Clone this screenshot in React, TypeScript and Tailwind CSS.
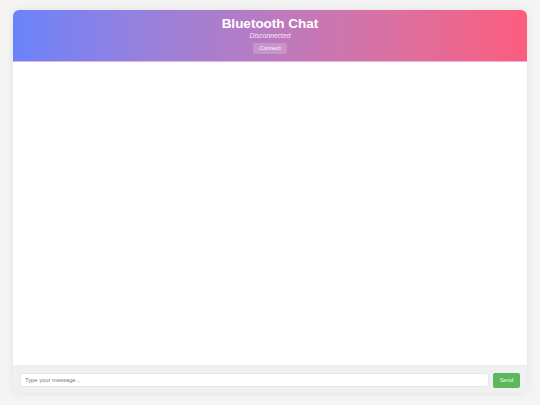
import React from "react";

export default function App() {
  return (
    <div className="w-[540px] h-[405px] bg-[#f4f4f4] pt-[10px] px-[13px] overflow-hidden" style={{ fontFamily: '"Liberation Sans", Arial, sans-serif' }}>
      <div className="h-[383px] flex flex-col rounded-[6px] overflow-hidden bg-white shadow-[0_0_8px_rgba(0,0,0,0.08)]">
        <div className="h-[52px] shrink-0 bg-gradient-to-r from-[#6a82fb] to-[#fc5c7d] flex flex-col items-center pt-[6px] border-b border-[#e6b3dc]">
          <div className="text-white font-bold text-[13.5px] leading-[16px]">Bluetooth Chat</div>
          <div className="text-white/80 italic text-[6.75px] leading-[9px] mt-[-1px]">Disconnected</div>
          <button className="mt-[3px] h-[11px] px-[6px] rounded-[2px] bg-white/20 text-white/90 text-[5.8px] leading-[11px]">Connect</button>
        </div>
        <div className="flex-1 bg-white" />
        <div className="h-[28px] shrink-0 bg-[#f0f0f0] flex items-center px-[7px] gap-[4px] pt-[2px]">
          <input
            className="flex-1 h-[14px] bg-white border border-[#e8e8e8] rounded-[2px] px-[4px] text-[5.8px] outline-none placeholder:text-[#777]"
            placeholder="Type your message..."
          />
          <button className="w-[27px] h-[15px] rounded-[2px] bg-[#5cb85c] text-white/90 text-[5.8px]">Send</button>
        </div>
      </div>
    </div>
  );
}
